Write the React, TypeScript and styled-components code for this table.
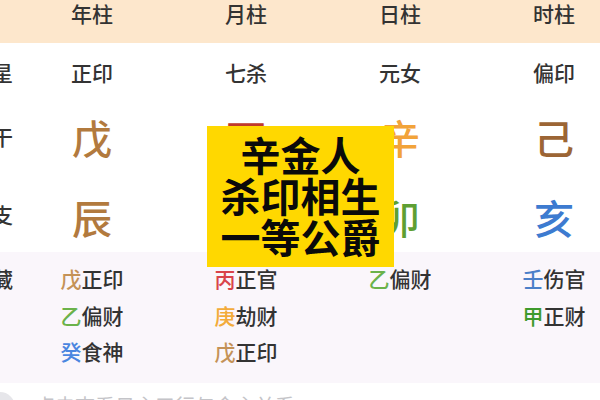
import React from "react";
import styled, { createGlobalStyle } from "styled-components";

const Global = createGlobalStyle`
  html, body { margin: 0; padding: 0; background: #fff; }
  body { font-family: "Noto Sans CJK SC", "Noto Sans", sans-serif; }
`;

const Page = styled.div`
  position: relative;
  width: 600px;
  height: 400px;
  overflow: hidden;
  background: #fff;
`;

const Grid = styled.div<{ $h: number; $bg?: string; $pt?: number; $align?: string }>`
  display: grid;
  grid-template-columns: 28px repeat(4, 154px);
  margin-left: -13px;
  height: ${(p) => p.$h}px;
  background: ${(p) => p.$bg || "transparent"};
  padding-top: ${(p) => p.$pt || 0}px;
  box-sizing: border-box;
  align-items: ${(p) => p.$align || "center"};
`;

const Cell = styled.div<{ $size: number; $color?: string; $weight?: number }>`
  display: flex;
  justify-content: center;
  white-space: nowrap;
  font-size: ${(p) => p.$size}px;
  line-height: 1.3;
  color: ${(p) => p.$color || "#333"};
  font-weight: ${(p) => p.$weight || 500};
`;

const Label = styled(Cell)<{ $mt?: number }>`
  justify-content: flex-end;
  padding-right: 2px;
  margin-top: ${(p) => p.$mt || 0}px;
`;

const Stack = styled.div`
  display: flex;
  flex-direction: column;
  align-items: center;
`;

const HiddenLine = styled.div`
  font-size: 21px;
  line-height: 36.5px;
  height: 36.5px;
  font-weight: 500;
  color: #333;
  white-space: nowrap;
`;

const Stem = styled.span<{ $color: string }>`
  color: ${(p) => p.$color};
`;

const Footer = styled.div`
  display: flex;
  align-items: flex-start;
  gap: 20px;
  padding-top: 9px;
  margin-left: -1px;
`;

const Dot = styled.div`
  width: 16px;
  height: 30px;
  border-radius: 0 15px 15px 0;
  background: #e6e6ea;
  flex: none;
`;

const FooterText = styled.div`
  font-size: 20px;
  line-height: 28px;
  color: #c4c4c8;
  white-space: nowrap;
`;

const Sticker = styled.div`
  position: absolute;
  left: 207px;
  top: 126px;
  width: 187px;
  height: 141px;
  box-sizing: border-box;
  background: #ffd800;
  display: flex;
  flex-direction: column;
  align-items: center;
  justify-content: center;
  font-size: 40px;
  line-height: 41px;
  font-weight: 700;
  color: #0a0a0a;
  text-align: center;
  padding-bottom: 2px;
`;

const C = {
  brown: "#b27a3e",
  darkBrown: "#9c6535",
  orange: "#f2a33a",
  green: "#5e9f33",
  blue: "#3d7bd0",
  red: "#c0392b",
};

type H = { s: string; c: string; g: string };
const hidden: H[][] = [
  [
    { s: "戊", g: "正印", c: "#c49257" },
    { s: "乙", g: "偏财", c: "#6bb24a" },
    { s: "癸", g: "食神", c: "#4a86e0" },
  ],
  [
    { s: "丙", g: "正官", c: "#d9434a" },
    { s: "庚", g: "劫财", c: "#f3ab3a" },
    { s: "戊", g: "正印", c: "#c49257" },
  ],
  [{ s: "乙", g: "偏财", c: "#6bb24a" }],
  [
    { s: "壬", g: "伤官", c: "#4a7fc9" },
    { s: "甲", g: "正财", c: "#3e9a2c" },
  ],
];

export default function App() {
  return (
    <Page>
      <Global />
      <Grid $h={43} $bg="#fde7cc" $align="start" $pt={0}>
        <Label $size={21} />
        {["年柱", "月柱", "日柱", "时柱"].map((t) => (
          <Cell key={t} $size={21}>{t}</Cell>
        ))}
      </Grid>
      <Grid $h={60}>
        <Label $size={21}>主星</Label>
        {["正印", "七杀", "元女", "偏印"].map((t, i) => (
          <Cell key={i} $size={21}>{t}</Cell>
        ))}
      </Grid>
      <Grid $h={68}>
        <Label $size={21}>天干</Label>
        <Cell $size={40} $color={C.brown}>戊</Cell>
        <Cell $size={40} $color={C.red}>丁</Cell>
        <Cell $size={40} $color={C.orange}>辛</Cell>
        <Cell $size={40} $color={C.darkBrown}>己</Cell>
      </Grid>
      <Grid $h={81} $align="start" $pt={20}>
        <Label $size={21} $mt={10}>地支</Label>
        <Cell $size={40} $color={C.brown}>辰</Cell>
        <Cell $size={40} $color={C.red}>巳</Cell>
        <Cell $size={40} $color={C.green}>卯</Cell>
        <Cell $size={40} $color={C.blue}>亥</Cell>
      </Grid>
      <Grid $h={131} $bg="#faf6fb" $align="start" $pt={8}>
        <Label $size={21} $mt={5}>暗藏</Label>
        {hidden.map((col, i) => (
          <Stack key={i}>
            {col.map((h, j) => (
              <HiddenLine key={j}>
                <Stem $color={h.c}>{h.s}</Stem>
                {h.g}
              </HiddenLine>
            ))}
          </Stack>
        ))}
      </Grid>
      <Footer>
        <Dot />
        <FooterText>点击查看日主五行与命主关系</FooterText>
      </Footer>
      <Sticker>
        <div>辛金人</div>
        <div>杀印相生</div>
        <div>一等公爵</div>
      </Sticker>
    </Page>
  );
}
